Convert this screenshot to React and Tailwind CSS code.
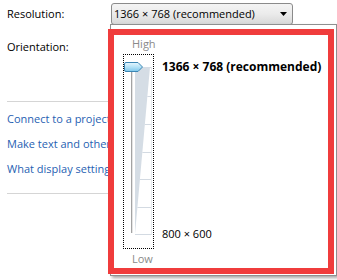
import React from "react";

function Arrow() {
  return (
    <svg width="7" height="4" viewBox="0 0 7 4" className="block">
      <path d="M0 0 H7 L3.5 4 Z" fill="#000" />
    </svg>
  );
}

function SliderArt() {
  const ticks = [12, 41, 69, 97, 124, 152, 179];
  const edge = (y) => 26 - (15 * (y - 12)) / 167;
  return (
    <svg width="29" height="193" viewBox="0 0 29 193" className="block">
      <polygon points="11,12 26,12 11,179" fill="#d5dde5" />
      {ticks.map((y) => (
        <line key={y} x1={edge(y)} y1={y + 0.5} x2="28" y2={y + 0.5} stroke="#d3dae2" strokeWidth="1" />
      ))}
      <line x1="27.5" y1="12" x2="27.5" y2="180" stroke="#e6eaee" strokeWidth="1" />
      <line x1="7.5" y1="17" x2="7.5" y2="178" stroke="#a3a3a3" strokeWidth="1" />
      <line x1="8.5" y1="17" x2="8.5" y2="178" stroke="#e4e4e4" strokeWidth="1" />
      <defs>
        <linearGradient id="thumb" x1="0" y1="0" x2="0" y2="1">
          <stop offset="0" stopColor="#e6f7fe" />
          <stop offset="0.5" stopColor="#b4e2f7" />
          <stop offset="1" stopColor="#7cc6ea" />
        </linearGradient>
      </defs>
      <path
        d="M2 7.5 H14 L18.5 12 L14 16.5 H2 Q0.5 16.5 0.5 15 V9 Q0.5 7.5 2 7.5 Z"
        fill="url(#thumb)"
        stroke="#3c86b4"
        strokeWidth="1"
      />
    </svg>
  );
}

export default function App() {
  return (
    <div className="relative w-[337px] h-[280px] overflow-hidden bg-white text-[11px] leading-[16px] text-black font-['Open_Sans','Noto_Sans',sans-serif]">
      <div className="pt-[3px]">
        <div className="flex items-center h-[22px] pl-[7px]">
          <span className="w-[104px]">Resolution:</span>
          <div className="flex items-center justify-between w-[182px] h-[22px] rounded-[3px] border border-[#8b8b8b] bg-gradient-to-b from-[#f4f4f4] via-[#ebebeb] to-[#d8d8d8] pl-[2px] pr-[5px]">
            <span className="whitespace-nowrap">1366 × 768 (recommended)</span>
            <Arrow />
          </div>
        </div>
        <div className="flex items-center h-[22px] mt-[11px] pl-[7px]">Orientation:</div>
        <div className="mt-[43px] ml-[7px] h-px bg-[#d5d5d5]" />
        <div className="pt-[4px] pl-[7px] text-[#1f5fb2] whitespace-nowrap">
          <div className="h-[25px] flex items-center">Connect to a projector (or press the Windows logo key and tap P)</div>
          <div className="h-[25px] flex items-center">Make text and other items larger or smaller</div>
          <div className="h-[25px] flex items-center">What display settings should I choose?</div>
        </div>
        <div className="mt-[12px] ml-[7px] h-px bg-[#d5d5d5]" />
      </div>

      <div className="absolute left-[110px] top-[24px] w-[227px] h-[252px] border border-[#8f8f8f] bg-white shadow-[2px_2px_3px_rgba(0,0,0,0.35)]">
        <div className="pl-[12px] pt-[11px] flex flex-col">
          <div className="ml-[9px] text-[#8a8a8a]">High</div>
          <div className="flex mt-[2px]">
            <div className="w-[31px] h-[195px] border border-dotted border-black">
              <SliderArt />
            </div>
            <div className="ml-[8px] pt-[5px] pb-[7px] flex flex-col justify-between whitespace-nowrap">
              <div className="font-bold text-[12px]">1366 × 768 (recommended)</div>
              <div>800 × 600</div>
            </div>
          </div>
          <div className="ml-[9px] mt-[2px] text-[#8a8a8a]">Low</div>
        </div>
      </div>

      <div className="absolute left-[108px] top-[29px] w-[226px] h-[245px] border-[6px] border-[#f03c3c]" />
    </div>
  );
}
